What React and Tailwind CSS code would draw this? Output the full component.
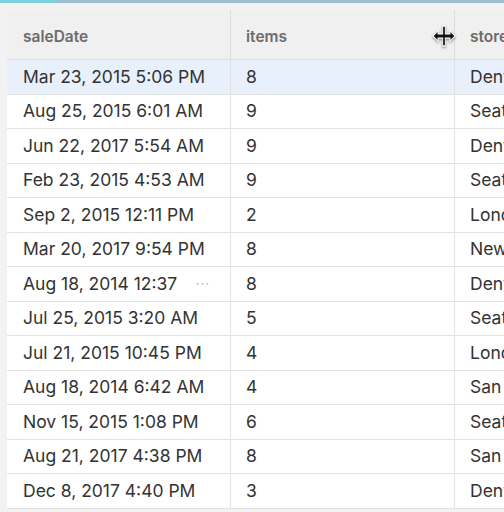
const rows = [
	["Mar 23, 2015 5:06 PM", "8", "Denver"],
	["Aug 25, 2015 6:01 AM", "9", "Seattle"],
	["Jun 22, 2017 5:54 AM", "9", "Denver"],
	["Feb 23, 2015 4:53 AM", "9", "Seattle"],
	["Sep 2, 2015 12:11 PM", "2", "London"],
	["Mar 20, 2017 9:54 PM", "8", "New York"],
	["Aug 18, 2014 12:37", "8", "Denver", true],
	["Jul 25, 2015 3:20 AM", "5", "Seattle"],
	["Jul 21, 2015 10:45 PM", "4", "London"],
	["Aug 18, 2014 6:42 AM", "4", "San Diego"],
	["Nov 15, 2015 1:08 PM", "6", "Seattle"],
	["Aug 21, 2017 4:38 PM", "8", "San Diego"],
	["Dec 8, 2017 4:40 PM", "3", "Denver"],
]

function MoveCursor() {
	return (
		<svg width="28" height="28" viewBox="0 0 26 26" className="drop-shadow-[0_1px_1px_rgba(0,0,0,0.5)]">
			<path
				d="M11.5 3h3v7.5h3.5V7l6 6-6 6v-3.5h-3.5V23h-3v-7.5H8V19l-6-6 6-6v3.5h3.5z"
				fill="#fff"
			/>
			<path
				d="M12.2 4.5h1.6v7h5.2V9.4L22.6 13 19 16.6v-2.1h-5.2v7h-1.6v-7H7v2.1L3.4 13 7 9.4v2.1h5.2z"
				fill="#111"
			/>
		</svg>
	)
}

export default function App() {
	return (
		<div
			className="w-[504px] h-[512px] overflow-hidden bg-[#f2f2f2] relative"
			style={{ fontFamily: "Inter, 'Liberation Sans', sans-serif" }}
		>
			{/* top strip */}
			<div className="h-[3px] bg-[#9dbdd0] flex">
				<div className="w-[57px] h-full bg-[#7fcfdf]" />
			</div>

			<div className="pt-[7px] pl-[7px]">
				<div className="bg-white w-[600px]">
					{/* header */}
					<div className="flex h-[50px] bg-[#f0f0f0] border-b border-[#dcdcdc] text-[15.5px] font-semibold text-[#6b6b6b]">
						<div className="w-[224px] shrink-0 flex items-center pl-[16px] pt-1 border-r border-[#dcdcdc]">
							saleDate
						</div>
						<div className="w-[224px] shrink-0 flex items-center pl-[15px] pt-1 border-r border-[#dcdcdc] relative">
							items
							<div className="absolute right-[-4px] top-[12px]">
								<MoveCursor />
							</div>
						</div>
						<div className="flex-1 flex items-center pl-[15px] pt-1">storeLocation</div>
					</div>

					{/* rows */}
					{rows.map((r, i) => (
						<div
							key={i}
							className={`flex h-[34.5px] border-b border-[#e3e3e3] text-[17.5px] text-[#333] ${
								i === 0 ? "bg-[#e8f0fb]" : "bg-white"
							}`}
						>
							<div className="w-[224px] shrink-0 flex items-center pl-[16px] pr-3 border-r border-[#e3e3e3] whitespace-nowrap overflow-hidden">
								<span>{r[0]}</span>
								{r[3] && (
									<span className="ml-auto mr-2 text-[#8fb5c0] text-[13px] tracking-[1px]">
										···
									</span>
								)}
							</div>
							<div className="w-[224px] shrink-0 flex items-center pl-[15px] border-r border-[#e3e3e3]">
								{r[1]}
							</div>
							<div className="flex-1 flex items-center pl-[15px] whitespace-nowrap">{r[2]}</div>
						</div>
					))}
				</div>
			</div>
		</div>
	)
}
